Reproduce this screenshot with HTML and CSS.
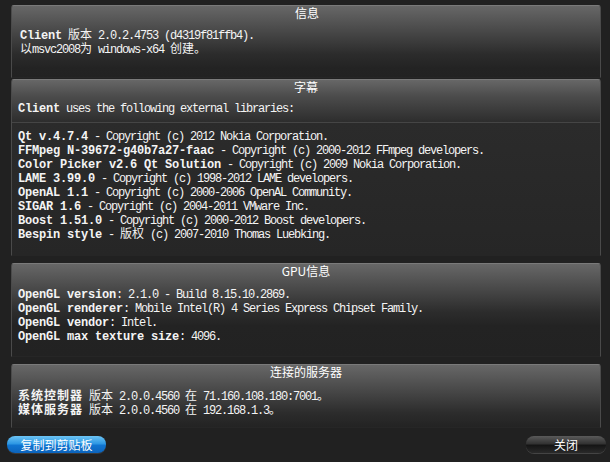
FILE: index.html
```html
<!DOCTYPE html>
<html lang="zh">
<head>
<meta charset="utf-8">
<title>关于</title>
<link rel="stylesheet" href="styles.css">
</head>
<body>
<div class="dialog">
  <section class="panel p1">
    <div class="title">信息</div>
    <div class="body">
      <div class="line"><b>Client</b> <span class="cn">版本</span> 2.0.2.4753 (d4319f81ffb4).</div>
      <div class="line"><span class="cn">以</span>msvc2008<span class="cn">为</span> windows-x64 <span class="cn">创建。</span></div>
    </div>
  </section>

  <section class="panel p2">
    <div class="title">字幕</div>
    <div class="body">
      <div class="line"><b>Client</b> uses the following external libraries:</div>
      <div class="line"> </div>
      <div class="line"><b>Qt v.4.7.4</b> - Copyright (c) 2012 Nokia Corporation.</div>
      <div class="line"><b>FFMpeg N-39672-g40b7a27-faac</b> - Copyright (c) 2000-2012 FFmpeg developers.</div>
      <div class="line"><b>Color Picker v2.6 Qt Solution</b> - Copyright (c) 2009 Nokia Corporation.</div>
      <div class="line"><b>LAME 3.99.0</b> - Copyright (c) 1998-2012 LAME developers.</div>
      <div class="line"><b>OpenAL 1.1</b> - Copyright (c) 2000-2006 OpenAL Community.</div>
      <div class="line"><b>SIGAR 1.6</b> - Copyright (c) 2004-2011 VMware Inc.</div>
      <div class="line"><b>Boost 1.51.0</b> - Copyright (c) 2000-2012 Boost developers.</div>
      <div class="line"><b>Bespin style</b> - <span class="cn">版权</span> (c) 2007-2010 Thomas Luebking.</div>
    </div>
  </section>

  <section class="panel p3">
    <div class="title">GPU信息</div>
    <div class="body">
      <div class="line"><b>OpenGL version</b>: 2.1.0 - Build 8.15.10.2869.</div>
      <div class="line"><b>OpenGL renderer</b>: Mobile Intel(R) 4 Series Express Chipset Family.</div>
      <div class="line"><b>OpenGL vendor</b>: Intel.</div>
      <div class="line"><b>OpenGL max texture size</b>: 4096.</div>
    </div>
  </section>

  <section class="panel p4">
    <div class="title">连接的服务器</div>
    <div class="body">
      <div class="line"><b class="cn">系统控制器</b> <span class="cn">版本</span> 2.0.0.4560 <span class="cn">在</span> 71.160.108.180:7001<span class="cn">。</span></div>
      <div class="line"><b class="cn">媒体服务器</b> <span class="cn">版本</span> 2.0.0.4560 <span class="cn">在</span> 192.168.1.3<span class="cn">。</span></div>
    </div>
  </section>

  <div class="footer">
    <button class="btn btn-blue" type="button">复制到剪贴板</button>
    <button class="btn btn-dark" type="button">关闭</button>
  </div>
</div>
</body>
</html>
```

FILE: styles.css
```css
html, body {
  margin: 0;
  padding: 0;
  background: #212121;
}

body {
  width: 610px;
  height: 462px;
  overflow: hidden;
  color: #f4f4f4;
}

.dialog {
  padding: 5px 9px 0 11px;
}

.panel {
  border: 1px solid #3a3a3a;
  border-top-color: #7a7a7a;
  border-left-color: #4a4a4a;
  border-right-color: #4a4a4a;
  border-bottom-color: #262626;
  border-radius: 3px 3px 0 0;
  background: linear-gradient(to bottom, #676767 0, #4c4c4c 22px, #2c2c2c 48px, #232323 62px, #222222 100%);
  padding: 0 6px;
}

.title {
  font-family: "Noto Sans CJK SC", "Liberation Sans", sans-serif;
  font-size: 12px;
  line-height: 14px;
  height: 14px;
  text-align: center;
  color: #ffffff;
}

.body {
  font-family: "Liberation Mono", "Noto Sans CJK SC", monospace;
  font-size: 12px;
  line-height: 14px;
  letter-spacing: -1.2px;
}

.line {
  height: 14px;
  line-height: 14px;
  white-space: pre;
}

.body b {
  font-weight: bold;
  letter-spacing: -0.2px;
}

.body .cn {
  font-family: "Noto Sans CJK SC", sans-serif;
  letter-spacing: 0;
  line-height: 10px;
}

.body b.cn {
  letter-spacing: 1px;
}

.p1 {
  padding-left: 8px;
  padding-bottom: 20px;
}
.p1 .body { padding-top: 9px; }

.p2 {
  margin-top: 1px;
  padding-bottom: 13px;
  background: linear-gradient(to bottom, #676767 0, #4c4c4c 16px, #2d2d2d 42px, #454545 42px, #454545 43px, #2b2b2b 43px, #262626 100%);
}
.p2 .body { padding-top: 8px; }

.p3 {
  margin-top: 7px;
  padding-bottom: 12px;
}
.p3 .body { padding-top: 10px; }

.p4 {
  margin-top: 7px;
  padding-bottom: 9px;
}
.p4 .body { padding-top: 11px; }

.footer {
  display: flex;
  justify-content: space-between;
  margin: 8px -5px 0 -4px;
}

.btn {
  height: 17px;
  border: 0;
  padding: 0;
  font-family: "Noto Sans CJK SC", sans-serif;
  font-size: 12px;
  line-height: 17px;
  color: #ffffff;
  border-radius: 8px;
}

.btn-blue {
  width: 99px;
  background: linear-gradient(to bottom, #6cc4f4 0, #2e98e4 45%, #1074d0 55%, #0c64bc 100%);
  box-shadow: 0 1px 0 #3a3a3a;
}

.btn-dark {
  width: 80px;
  background: linear-gradient(to bottom, #5a5a5a 0, #333 45%, #151515 55%, #2a2a2a 100%);
  box-shadow: 0 1px 0 #444;
}
```
